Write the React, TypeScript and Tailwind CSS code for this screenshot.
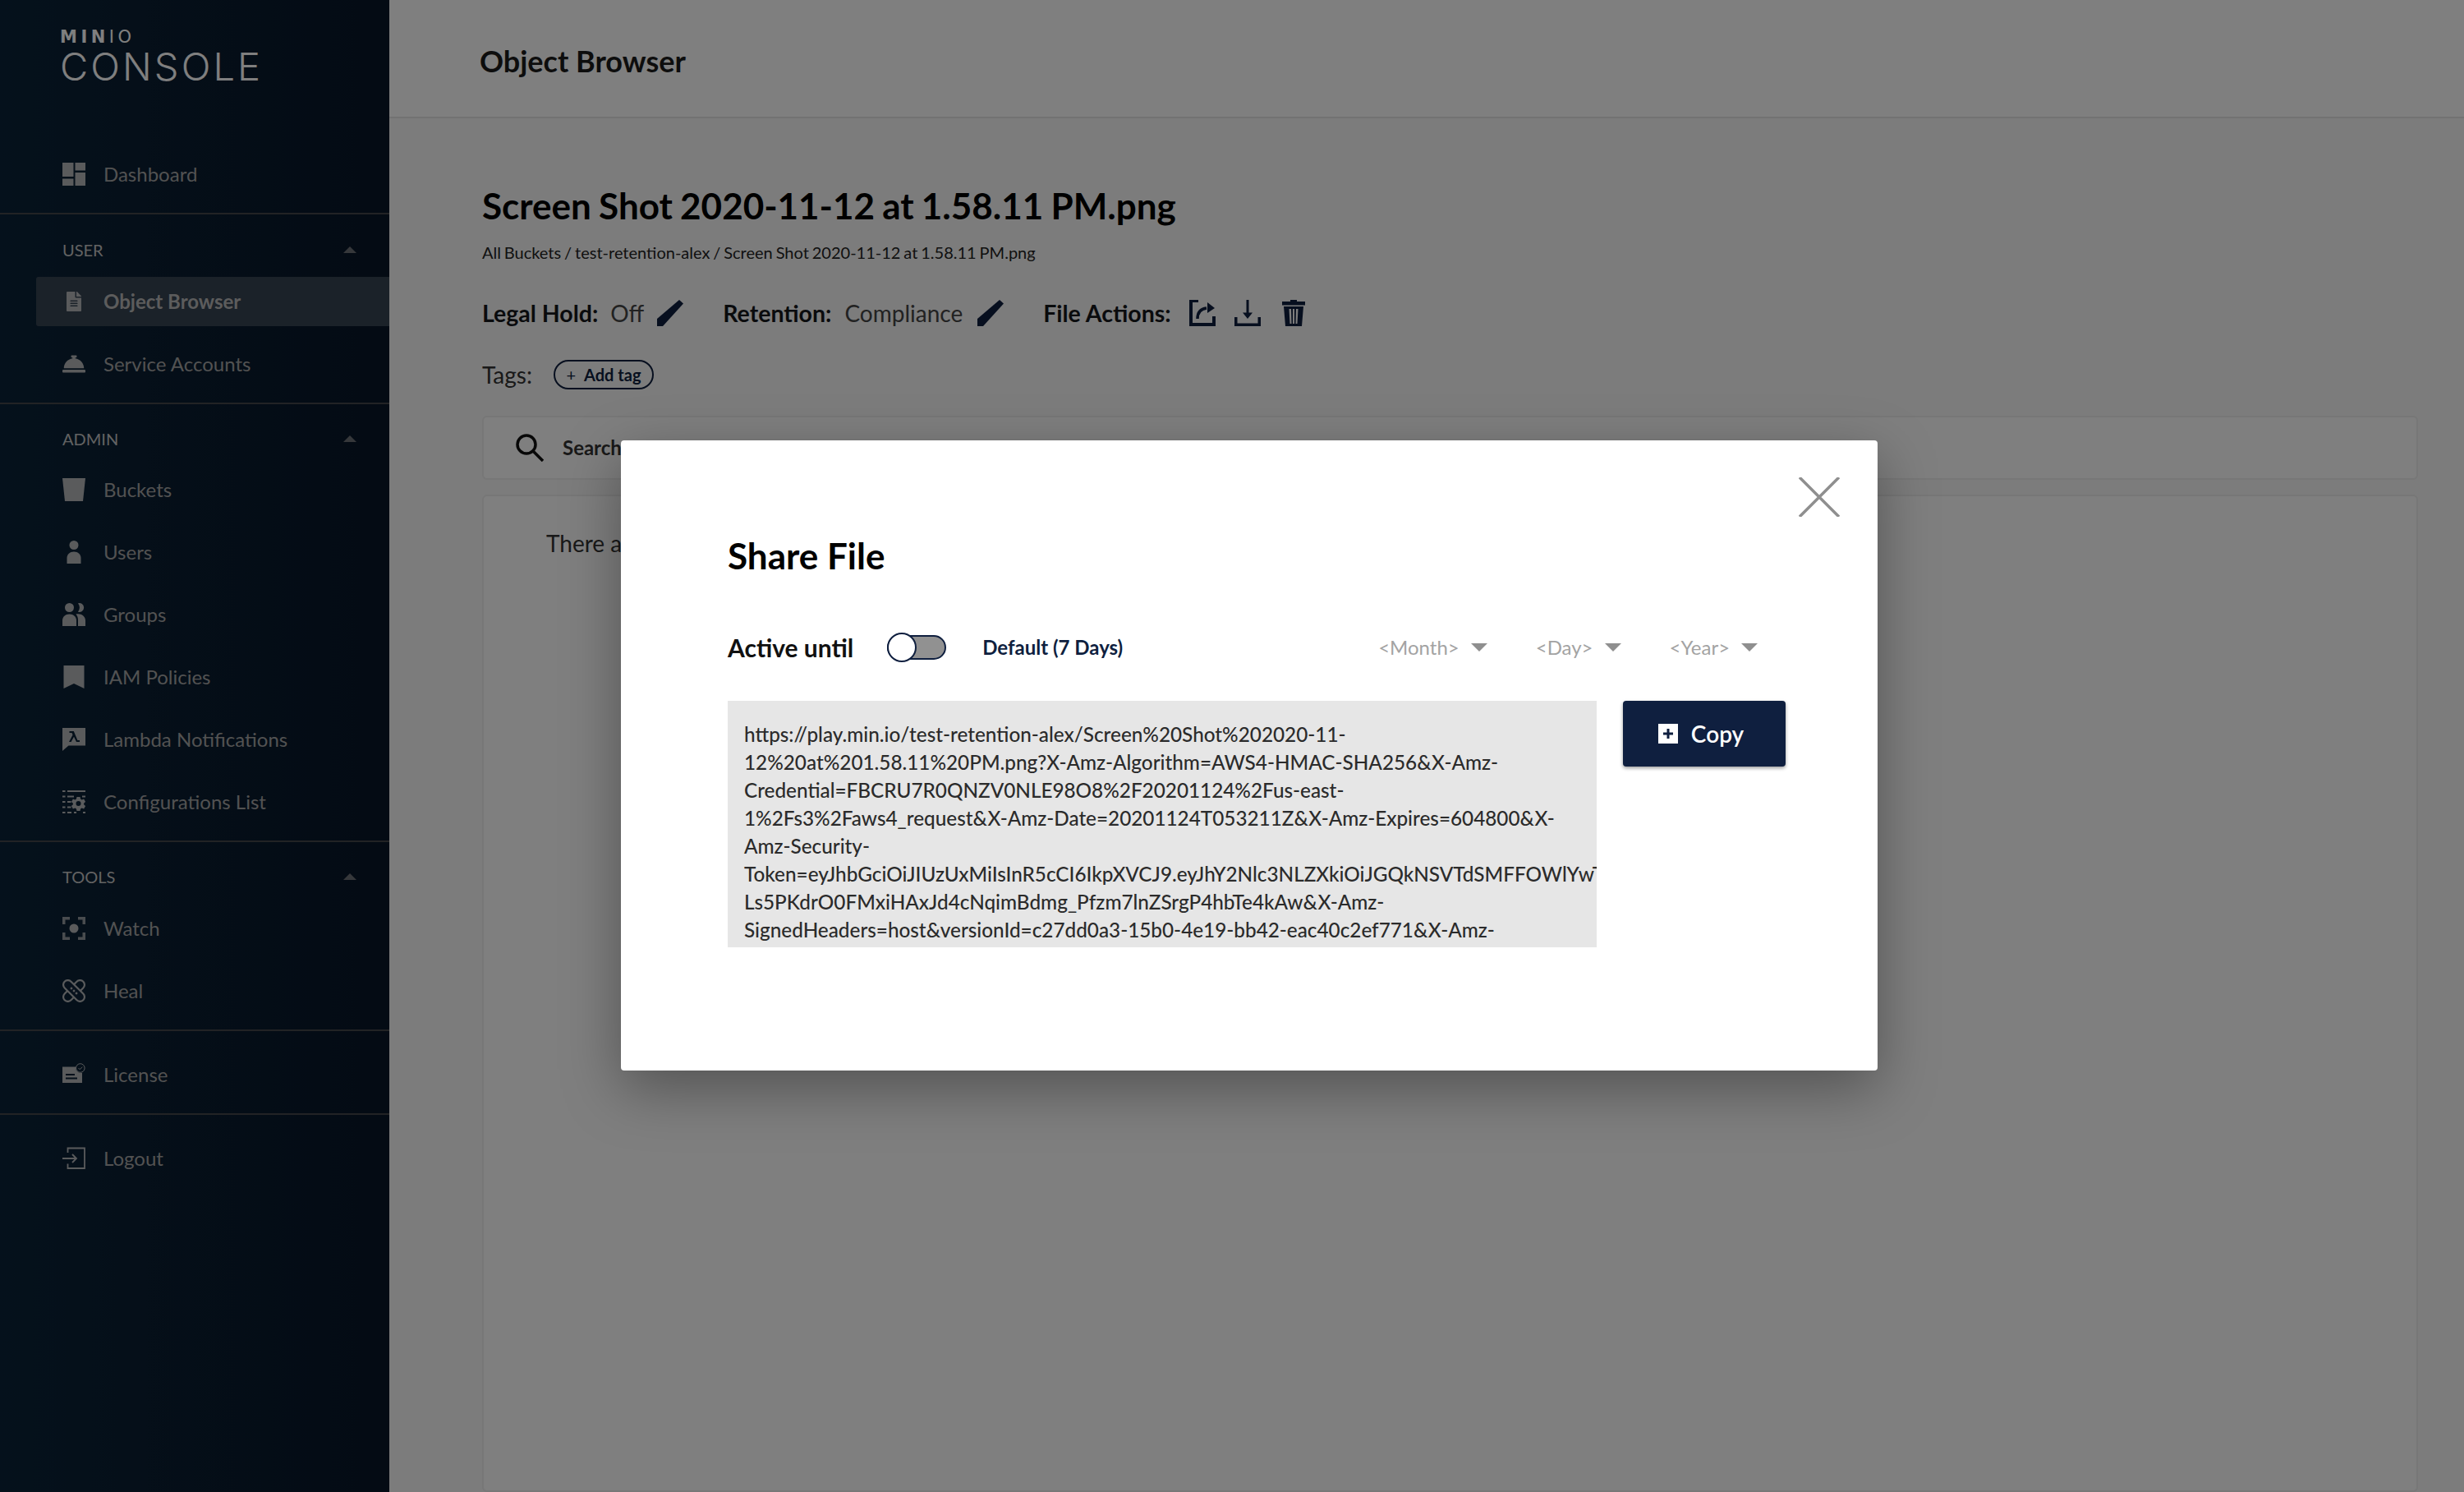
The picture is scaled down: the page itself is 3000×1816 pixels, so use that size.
import { FaConciergeBell, FaFileAlt } from "react-icons/fa";
import type { ReactNode } from "react";

const URL_TEXT =
  "https://play.min.io/test-retention-alex/Screen%20Shot%202020-11-12%20at%201.58.11%20PM.png?X-Amz-Algorithm=AWS4-HMAC-SHA256&X-Amz-Credential=FBCRU7R0QNZV0NLE98O8%2F20201124%2Fus-east-1%2Fs3%2Faws4_request&X-Amz-Date=20201124T053211Z&X-Amz-Expires=604800&X-Amz-Security-Token=eyJhbGciOiJIUzUxMiIsInR5cCI6IkpXVCJ9.eyJhY2Nlc3NLZXkiOiJGQkNSVTdSMFFOWlYwTkxFOThPOCIsImV4cCI6MTYwNjE5NTEzMH0-Ls5PKdrO0FMxiHAxJd4cNqimBdmg_Pfzm7lnZSrgP4hbTe4kAw&X-Amz-SignedHeaders=host&versionId=c27dd0a3-15b0-4e19-bb42-eac40c2ef771&X-Amz-Signature=4f2a";

function Ico({ children }: { children: ReactNode }) {
  return (
    <svg viewBox="0 0 28 28" className="h-7 w-7 fill-current">
      {children}
    </svg>
  );
}

const icons = {
  dashboard: (
    <Ico>
      <path d="M0 0h13.500v17H0zM0 19.500h13.500V28H0zM15.500 0H28v9.500H15.500zM15.500 12H28v16H15.500z" />
    </Ico>
  ),
  file: <FaFileAlt size={24} />,
  bell: <FaConciergeBell size={28} />,
  bucket: (
    <Ico>
      <path d="M0 0h28l-3 28H3z" />
    </Ico>
  ),
  user: (
    <Ico>
      <circle cx="14" cy="5.500" r="5.500" />
      <path d="M5.500 28v-7c0-4 3.500-7.500 8.500-7.500s8.500 3.500 8.500 7.500v7z" />
    </Ico>
  ),
  group: (
    <Ico>
      <circle cx="8.500" cy="5.500" r="5.500" />
      <path d="M19 0.300a5.500 5.500 0 1 1 0 10.500 9 9 0 0 0 0-10.500z" />
      <path d="M0 28v-7c0-4 3.500-7.500 8.500-7.500s8.500 3.500 8.500 7.500v7z" />
      <path d="M19 28v-8c0-2.500-1-4.500-2.500-6.500 6-1.500 11.500 2.500 11.500 7.500v7z" />
    </Ico>
  ),
  policy: (
    <Ico>
      <path d="M1.500 0h25v28l-12.500-6-12.500 6z" />
    </Ico>
  ),
  lambda: (
    <Ico>
      <path
        fillRule="evenodd"
        d="M0 0h28v21.500H7.500L0 28zM8.500 4v2h3l1 2.500L8 17h2.600l3.400-6.300 3 6.300h4v-2h-2.600L13.800 4z"
      />
    </Ico>
  ),
  config: (
    <Ico>
      <path d="M0 0h3.500v2H0zM6 0h22v2H6zM0 6.500h3.500v2H0zM6 6.500h8v2H6zM24 6.500h4v2h-4zM0 13h3.500v2H0zM6 13h4.500v2H6zM0 19.500h3.500v2H0zM6 19.500h4.500v2H6zM0 26h3.500v2H0zM6 26h5v2H6zM14 26h3v2h-3zM25 26h3v2h-3z" />
      <path
        fillRule="evenodd"
        d="M17.500 8h4l.6 2.600 1.500.8 2.500-.9 2 3.400-2 1.800v1.600l2 1.800-2 3.400-2.500-.9-1.500.8-.6 2.600h-4l-.6-2.600-1.500-.8-2.500.9-2-3.400 2-1.800v-1.600l-2-1.800 2-3.400 2.500.9 1.500-.8zM19.500 13a3 3 0 1 0 0 6 3 3 0 0 0 0-6z"
      />
    </Ico>
  ),
  watch: (
    <Ico>
      <circle cx="14" cy="14" r="5.500" />
      <path d="M0 0h9v3.500H3.500V9H0zM19 0h9v9h-3.500V3.500H19zM0 19h3.500v5.500H9V28H0zM24.500 19H28v9h-9v-3.500h5.500z" opacity=".8" />
    </Ico>
  ),
  heal: (
    <svg viewBox="0 0 28 28" className="h-7 w-7 fill-none stroke-current" strokeWidth="2.200">
      <rect x="-2" y="8.500" width="32" height="11" rx="5.500" transform="rotate(-45 14 14)" />
      <rect x="-2" y="8.500" width="32" height="11" rx="5.500" transform="rotate(45 14 14)" fill="#0f2238" />
      <g transform="rotate(45 14 14)" className="fill-current" stroke="none">
        <rect x="8.500" y="12.800" width="2.400" height="2.400" />
        <rect x="12.800" y="12.800" width="2.400" height="2.400" />
        <rect x="17.100" y="12.800" width="2.400" height="2.400" />
      </g>
    </svg>
  ),
  license: (
    <Ico>
      <path fillRule="evenodd" d="M0 4.500h16a7 7 0 0 0 8 7.500v12H0zM4 13v2h11v-2zM4 17.500v2h14v-2z" />
      <circle cx="21.800" cy="6" r="5.300" fill="none" stroke="currentColor" strokeWidth="1" />
      <path d="M19.500 6l1.700 1.700 3-3" fill="none" stroke="currentColor" strokeWidth="1" />
    </Ico>
  ),
  logout: (
    <svg viewBox="0 0 28 28" className="h-7 w-7 fill-none stroke-current" strokeWidth="1.800">
      <path d="M6.500 7V1.500H27V26H6.500v-5.500M0 14h17M12 9l5 5-5 5" />
    </svg>
  ),
};

function SectionHead({ label, mb }: { label: string; mb: string }) {
  return (
    <div className={`flex h-7 items-center justify-between pl-[76px] pr-[40px] text-[20px] text-[#c4c4c4] ${mb}`}>
      <span>{label}</span>
      <span className="h-0 w-0 border-x-[8px] border-b-[8px] border-x-transparent border-b-[#6d7076]" />
    </div>
  );
}

function NavRow({ icon, label, active }: { icon: ReactNode; label: string; active?: boolean }) {
  return (
    <div
      className={`ml-[44px] flex h-[60px] items-center rounded-l-[3px] pl-[32px] text-[24px] ${
        active ? "bg-[#364453] font-bold text-[#b9b9b9]" : "text-[#a4a4a4]"
      }`}
    >
      <span className="flex w-7 justify-center text-[#b4b6b9]">{icon}</span>
      <span className="ml-[22px]">{label}</span>
    </div>
  );
}

function Sidebar() {
  return (
    <aside className="flex h-full w-[474px] shrink-0 flex-col bg-linear-to-r from-[#0b2338] to-[#081628]">
      <div className="h-[175px] pl-[73px] pt-[34px] text-white">
        <div className="flex h-[22px] items-center text-[21px] leading-none tracking-[4.500px]" style={{ fontFamily: "'DejaVu Sans', sans-serif" }}>
          <span className="font-bold">MIN</span>
          <span className="font-normal">IO</span>
        </div>
        <div className="mt-[1px] text-[47px] leading-[48px] font-light tracking-[3.100px]" style={{ fontFamily: "Inter, sans-serif" }}>
          CONSOLE
        </div>
      </div>
      <div className="flex flex-col gap-4 pt-[7px] pb-[17px]">
        <NavRow icon={icons.dashboard} label="Dashboard" />
      </div>
      <div className="border-t-2 border-[#44464a]" />
      <div className="flex flex-col pt-[29px] pb-[17px]">
        <SectionHead label="USER" mb="mb-[19px]" />
        <div className="flex flex-col gap-4">
          <NavRow icon={icons.file} label="Object Browser" active />
          <NavRow icon={icons.bell} label="Service Accounts" />
        </div>
      </div>
      <div className="border-t-2 border-[#44464a]" />
      <div className="flex flex-col pt-[28px] pb-[17px]">
        <SectionHead label="ADMIN" mb="mb-[18px]" />
        <div className="flex flex-col gap-4">
          <NavRow icon={icons.bucket} label="Buckets" />
          <NavRow icon={icons.user} label="Users" />
          <NavRow icon={icons.group} label="Groups" />
          <NavRow icon={icons.policy} label="IAM Policies" />
          <NavRow icon={icons.lambda} label="Lambda Notifications" />
          <NavRow icon={icons.config} label="Configurations List" />
        </div>
      </div>
      <div className="border-t-2 border-[#44464a]" />
      <div className="flex flex-col pt-[28px] pb-[17px]">
        <SectionHead label="TOOLS" mb="mb-[19px]" />
        <div className="flex flex-col gap-4">
          <NavRow icon={icons.watch} label="Watch" />
          <NavRow icon={icons.heal} label="Heal" />
        </div>
      </div>
      <div className="border-t-2 border-[#44464a]" />
      <div className="pt-[23px] pb-[17px]">
        <NavRow icon={icons.license} label="License" />
      </div>
      <div className="border-t-2 border-[#44464a]" />
      <div className="pt-[23px]">
        <NavRow icon={icons.logout} label="Logout" />
      </div>
    </aside>
  );
}

function Pencil() {
  return (
    <svg viewBox="0 0 32 32" className="h-8 w-8 fill-[#0f1f3f]">
      <path d="M0 32v-9L27 0l5 4.500L7 32z" />
    </svg>
  );
}

function MainContent() {
  return (
    <main className="flex h-full min-w-0 flex-1 flex-col bg-[#f8f8f8]">
      <header className="flex h-[144px] shrink-0 items-center border-b-2 border-[#e4e4e4] bg-white pl-[110px] pt-[5px] text-[36px] font-bold text-[#1a1a1a]">
        Object Browser
      </header>
      <div className="flex min-h-0 flex-1 flex-col pl-[113px] pr-[56px] text-[#14161a]">
        <h1 className="mt-[77px] text-[44px] leading-[58px] font-bold [word-spacing:-1.500px] text-black">
          Screen Shot 2020-11-12 at 1.58.11 PM.png
        </h1>
        <div className="mt-[16px] text-[20px] leading-[24px] [word-spacing:-1.200px] text-[#222]">
          All Buckets / test-retention-alex / Screen Shot 2020-11-12 at 1.58.11 PM.png
        </div>
        <div className="mt-[42px] flex h-[40px] items-center text-[28px]">
          <span className="text-[28.500px] font-bold">Legal Hold:</span>
          <span className="ml-[15px] text-[#444]">Off</span>
          <span className="ml-[16px]">
            <Pencil />
          </span>
          <span className="ml-[48px] text-[28.500px] font-bold">Retention:</span>
          <span className="ml-[16px] text-[#444]">Compliance</span>
          <span className="ml-[18px]">
            <Pencil />
          </span>
          <span className="ml-[48px] text-[28.500px] font-bold">File Actions:</span>
          <svg viewBox="0 0 32 32" className="ml-[22px] h-8 w-8 fill-[#0f1f3f]">
            <path d="M0 0h11v3H4v25h24V20h4v12H0z" />
            <path d="M10 23c0-7 3-12 11-13" fill="none" stroke="#0f1f3f" strokeWidth="3.500" />
            <path d="M22 3l9 7-9 6z" />
          </svg>
          <svg viewBox="0 0 32 32" className="ml-[23px] h-8 w-8 fill-[#0f1f3f]">
            <path d="M14.500 0h3v17h-3zM10 15.500h12L16 23zM0 21h3.500v7.500h25V21H32v11H0z" />
          </svg>
          <svg viewBox="0 0 28 32" className="ml-[26px] h-8 w-7 fill-[#0f1f3f]">
            <path
              fillRule="evenodd"
              d="M10 0h8v2h10v4.500H0V2h10zM2 8h24l-2 24H4zM8.500 11l1 18h2L11 11zM13 11v18h2V11zM17 11l-.5 18h2l1-18z"
            />
          </svg>
        </div>
        <div className="mt-[35px] flex h-[40px] items-center text-[28px] text-[#333]">
          <span>Tags:</span>
          <span className="ml-[26px] flex h-[36px] w-[122px] items-center justify-center rounded-full border-2 border-[#0f1f3f] text-[20px] font-bold text-[#0f1f3f]">
            <span className="mr-[10px] text-[20px] font-normal">+</span>
            Add tag
          </span>
        </div>
        <div className="mt-[30px] flex h-[78px] shrink-0 items-center rounded-[6px] border-2 border-[#eeeeee] bg-white pl-[39px] text-[24px] font-bold text-[#333]">
          <svg viewBox="0 0 34 34" className="h-[34px] w-[34px] fill-none stroke-[#111] stroke-[3.500]">
            <circle cx="13" cy="13" r="11" />
            <path d="M21 21l12 12" />
          </svg>
          <span className="ml-[23px]">Search</span>
        </div>
        <div className="mt-[18px] min-h-0 flex-1 rounded-[6px] border-2 border-[#eeeeee] bg-white pl-[76px] pt-[36px] text-[28px] text-[#333]">
          There a
        </div>
      </div>
    </main>
  );
}

function ShareModal() {
  return (
    <div className="absolute inset-0 flex items-start justify-center bg-black/50 pt-[536px] pl-[42px]">
      <div className="relative h-[767px] w-[1530px] rounded-[4px] bg-white pl-[130px] pt-[110px] shadow-[0_22px_70px_rgba(0,0,0,0.35)]">
        <svg viewBox="0 0 50 48" className="absolute right-[46px] top-[45px] h-[48px] w-[50px] fill-none stroke-[#8f8f8f] stroke-[3.500]">
          <path d="M1 0l48 48M49 0L1 48" />
        </svg>
        <h2 className="text-[44px] leading-[60px] font-bold text-black">Share File</h2>
        <div className="mt-[60px] flex h-[44px] items-center">
          <span className="text-[30px] font-bold text-[#111]">Active until</span>
          <span className="relative ml-[41px] block h-[30px] w-[72px] rounded-full border-2 border-[#0f1f3f] bg-[#919191]">
            <span className="absolute -left-[2px] -top-[5px] block h-[36px] w-[36px] rounded-full border-2 border-[#0f1f3f] bg-white" />
          </span>
          <span className="ml-[44px] text-[24px] font-bold text-[#0f1f3f]">Default (7 Days)</span>
          <div className="ml-[311px] flex items-center text-[24px] text-[#a3a3a3]">
            <span>&lt;Month&gt;</span>
            <span className="ml-[14px] h-0 w-0 border-x-[10px] border-t-[10px] border-x-transparent border-t-[#8f8f8f]" />
            <span className="ml-[59px]">&lt;Day&gt;</span>
            <span className="ml-[14px] h-0 w-0 border-x-[10px] border-t-[10px] border-x-transparent border-t-[#8f8f8f]" />
            <span className="ml-[59px]">&lt;Year&gt;</span>
            <span className="ml-[14px] h-0 w-0 border-x-[10px] border-t-[10px] border-x-transparent border-t-[#8f8f8f]" />
          </div>
        </div>
        <div className="mt-[43px] flex items-start">
          <div className="h-[300px] w-[1058px] overflow-hidden bg-[#e6e6e6] pl-[20px] pt-[24px] text-[24.300px] leading-[34px] font-medium text-[#2b2b2b]">
            {URL_TEXT}
          </div>
          <button
            type="button"
            className="ml-[32px] flex h-[80px] w-[198px] items-center justify-center rounded-[4px] bg-[#0f1f3f] pr-[8px] text-[28px] font-semibold text-white shadow-[0_2px_4px_rgba(0,0,0,0.4)]"
          >
            <svg viewBox="0 0 24 24" className="mr-[16px] h-6 w-6">
              <path fill="#fff" d="M0 0h24v24H0z" />
              <path fill="#0f1f3f" d="M10.500 6h3v4.500H18v3h-4.500V18h-3v-4.500H6v-3h4.500z" />
            </svg>
            Copy
          </button>
        </div>
      </div>
    </div>
  );
}

export default function App() {
  return (
    <div
      className="relative flex h-[1816px] w-[3000px] overflow-hidden"
      style={{ fontFamily: "Lato, 'Noto Sans', sans-serif" }}
    >
      <Sidebar />
      <MainContent />
      <ShareModal />
    </div>
  );
}
